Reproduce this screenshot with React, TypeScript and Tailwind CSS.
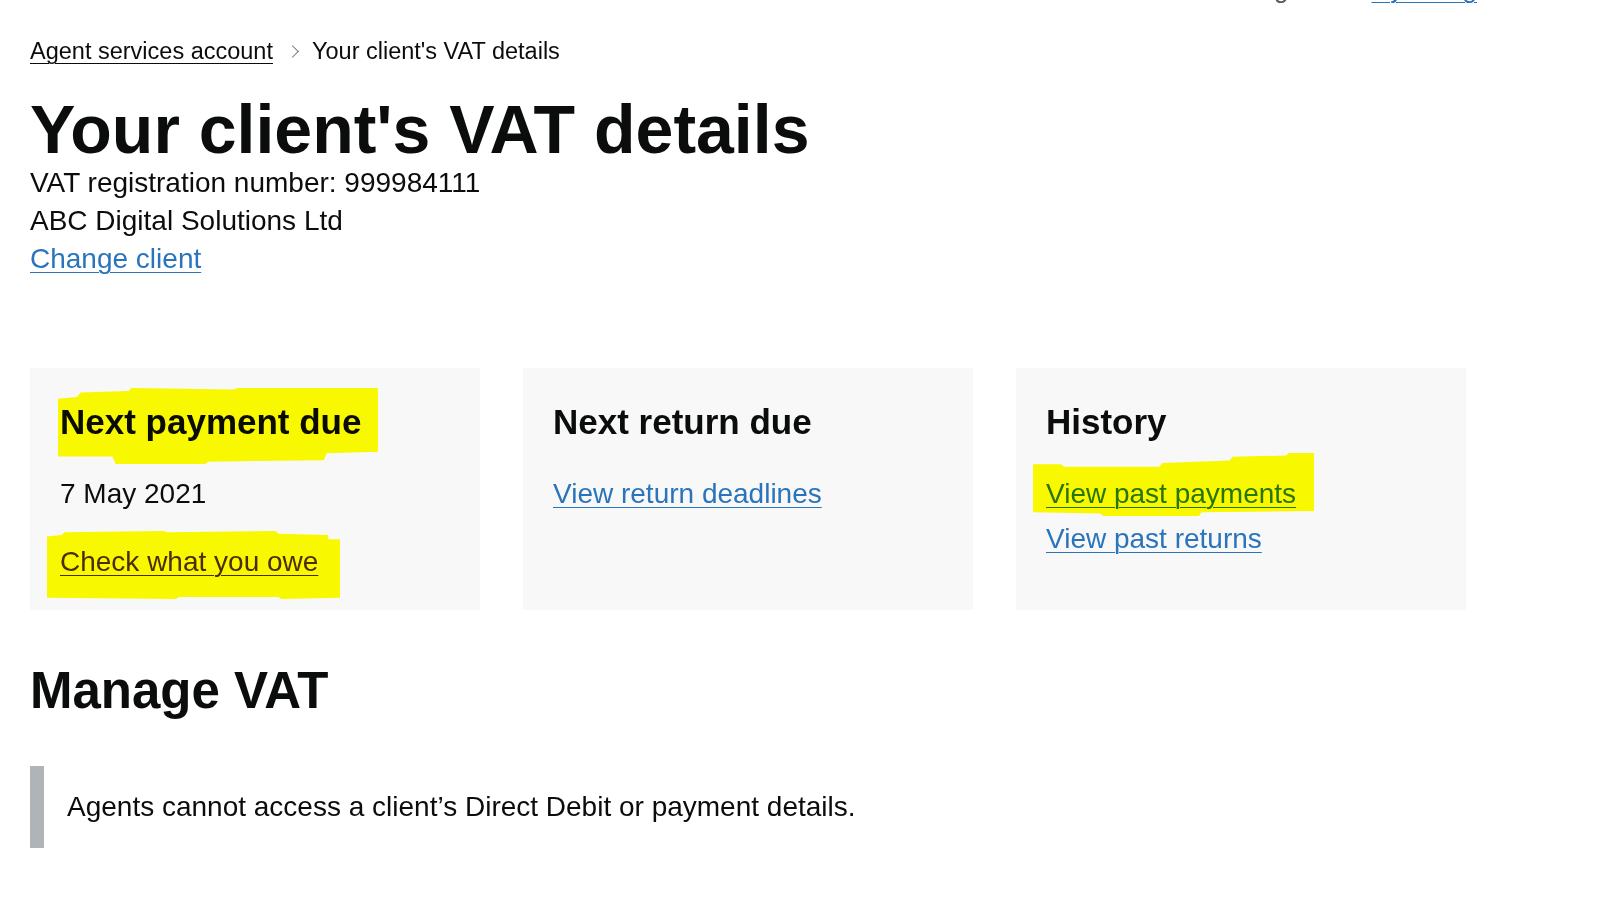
import React from "react"

const LINK = "text-[#2a74bb] underline decoration-1 underline-offset-[4px]"

function Highlight({ className }: { className: string }) {
  return (
    <span
      aria-hidden
      className={
        "pointer-events-none absolute bg-[#ffff00] mix-blend-multiply " + className
      }
    />
  )
}

function Card({ children }: { children: React.ReactNode }) {
  return <div className="h-[242px] w-[450px] bg-[#f8f8f8] pl-[30px] pt-[34px]">{children}</div>
}

function CardHeading({ children }: { children: React.ReactNode }) {
  return <h2 className="text-[35px] font-bold leading-[40px]">{children}</h2>
}

export default function App() {
  return (
    <div className="min-h-[900px] bg-white pl-[30px] font-['Liberation_Sans',Arial,sans-serif] text-[#0b0c0c]">
      {/* header row, scrolled almost out of view */}
      <div className="flex h-[4px] items-end justify-end gap-[44px] overflow-hidden pr-[123px] text-[26px] leading-[30px]">
        <span className="text-[#505a5f]">English</span>
        <a className={LINK}>Cymraeg</a>
      </div>

      <nav className="mt-[32px] flex items-center text-[23.5px] leading-[30px]">
        <a className="underline decoration-1 underline-offset-[4px]">Agent services account</a>
        <span className="mx-[15px] inline-block h-[9px] w-[9px] rotate-45 border-t border-r border-[#6f777b]" />
        <span>Your client's VAT details</span>
      </nav>

      <h1 className="mt-[30px] text-[68px] font-bold leading-[67px]">Your client's VAT details</h1>

      <div className="mt-[1px] text-[28px] leading-[38px]">
        <p>VAT registration number: 999984111</p>
        <p>ABC Digital Solutions Ltd</p>
        <a className={LINK}>Change client</a>
      </div>

      <div className="mt-[90px] flex gap-[43px]">
        <Card>
          <div className="relative inline-block">
            <CardHeading>Next payment due</CardHeading>
            <Highlight className="-left-[2px] -top-[14px] h-[76px] w-[320px] [clip-path:polygon(0_14%,6%_12%,7%_6%,22%_4%,23%_0,55%_2%,56%_0,100%_0,100%_84%,84%_86%,83%_95%,47%_97%,46%_100%,18%_100%,17%_90%,0_90%)]" />
          </div>
          <p className="mt-[33px] text-[28px] leading-[38px]">7 May 2021</p>
          <div className="relative mt-[30px] inline-block">
            <a className="text-[28px] leading-[38px] text-[#4c2c92] underline decoration-1 underline-offset-[4px]">
              Check what you owe
            </a>
            <Highlight className="-left-[13px] -top-[12px] h-[68px] w-[293px] [clip-path:polygon(0_8%,5%_6%,6%_2%,40%_0,41%_2%,78%_0,79%_4%,96%_6%,96%_12%,100%_12%,100%_98%,80%_100%,79%_97%,45%_97%,44%_100%,0_98%)]" />
          </div>
        </Card>

        <Card>
          <CardHeading>Next return due</CardHeading>
          <a className={"mt-[33px] inline-block text-[28px] leading-[38px] " + LINK}>View return deadlines</a>
        </Card>

        <Card>
          <CardHeading>History</CardHeading>
          <div className="mt-[33px] flex flex-col items-start text-[28px] leading-[38px]">
            <div className="relative inline-block">
              <a className={LINK}>View past payments</a>
              <Highlight className="-left-[13px] -top-[22px] h-[63px] w-[281px] [clip-path:polygon(0_18%,10%_18%,11%_22%,45%_22%,46%_16%,70%_12%,71%_6%,90%_4%,91%_0,100%_0,100%_92%,60%_94%,59%_100%,25%_100%,24%_96%,0_94%)]" />
            </div>
            <a className={"mt-[7px] " + LINK}>View past returns</a>
          </div>
        </Card>
      </div>

      <h2 className="mt-[53px] text-[51px] font-bold leading-[56px]">Manage VAT</h2>

      <div className="mt-[47px] border-l-[14px] border-[#b1b4b6] py-[22px] pl-[23px] text-[28px] leading-[38px]">
        Agents cannot access a client’s Direct Debit or payment details.
      </div>
    </div>
  )
}
